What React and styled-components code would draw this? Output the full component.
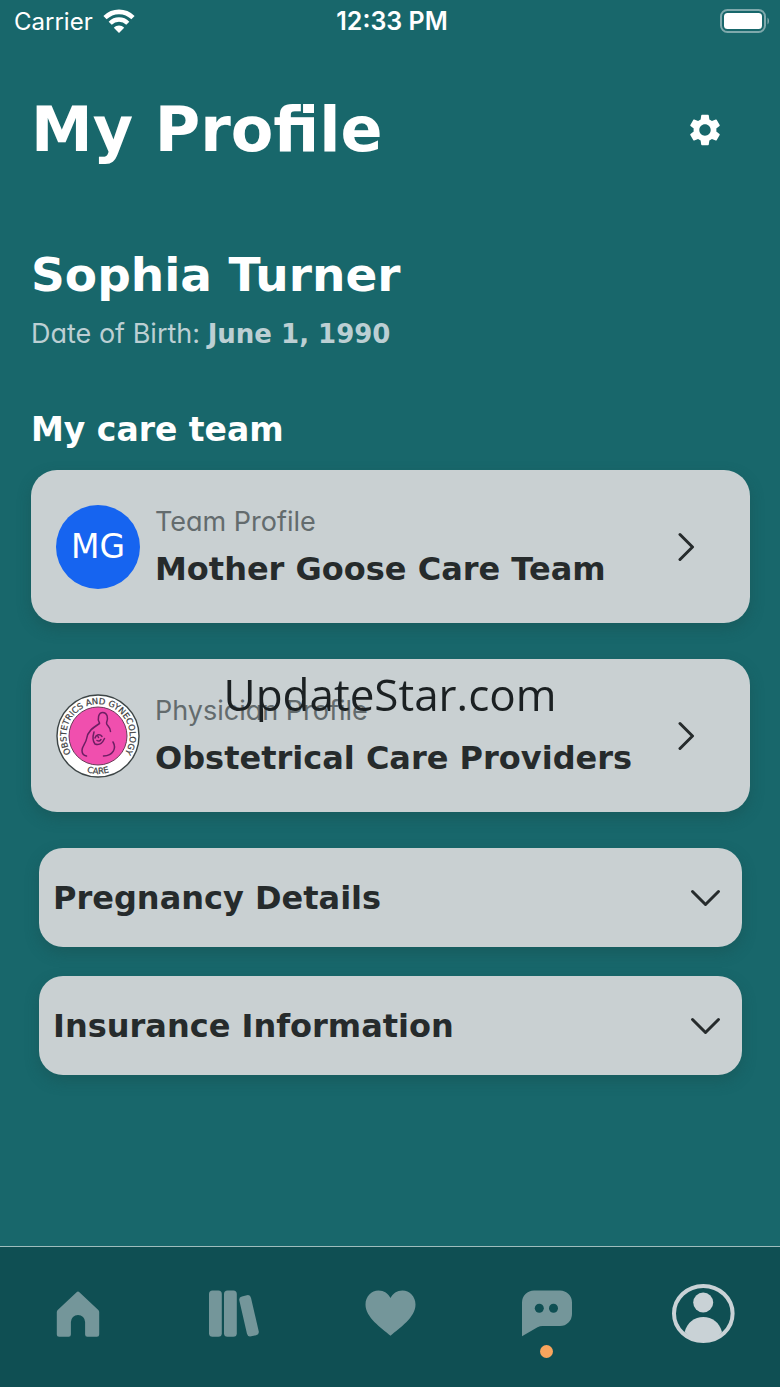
import React, { useState } from 'react'
import styled, { createGlobalStyle } from 'styled-components'
import { MdSettings } from 'react-icons/md'

const colors = {
  page: '#18676b',
  nav: '#0f4f53',
  card: '#c9d0d2',
  ink: '#262b2c',
  label: '#636b6d',
  muted: '#bccfd3',
  inactive: '#74969a',
  active: '#c9d2d6',
  blue: '#1664f0',
  pink: '#f04fae',
  orange: '#f9a55d',
}

const display = `'DejaVu Sans', sans-serif`
const body = `Inter, 'Liberation Sans', sans-serif`

const GlobalStyle = createGlobalStyle`
  * {
    box-sizing: border-box;
  }

  body {
    margin: 0;
    background: ${colors.page};
    font-family: ${body};
  }

  h1, h2, h3, p {
    margin: 0;
  }
`

const Page = styled.div`
  display: flex;
  flex-direction: column;
  min-height: 100vh;
  color: #fff;
  background: ${colors.page};
`

const StatusBar = styled.div`
  display: grid;
  grid-template-columns: 1fr auto 1fr;
  align-items: center;
  height: 44px;
  padding: 0 10px 2px 14px;
  font-size: 24px;
`

const Carrier = styled.div`
  display: flex;
  align-items: center;
  gap: 10px;
`

const Time = styled.time`
  font-size: 25px;
  font-weight: 600;
`

const Battery = styled.svg`
  justify-self: end;
`

const Main = styled.main`
  flex: 1;
  padding: 51px 30px 40px 31px;
`

const Header = styled.header`
  display: flex;
  align-items: center;
  justify-content: space-between;
  padding-right: 26px;
`

const Title = styled.h1`
  font: bold 62px/70px ${display};
`

const IconButton = styled.button`
  display: flex;
  padding: 0;
  border: 0;
  background: none;
  color: #fff;
  cursor: pointer;
`

const Person = styled.section`
  display: flex;
  flex-direction: column;
  gap: 13px;
  margin-top: 82px;
`

const Name = styled.h2`
  font: bold 47px/56px ${display};
`

const Birth = styled.p`
  font-size: 27px;
  line-height: 36px;
  font-feature-settings: 'cv11';
  color: ${colors.muted};

  strong {
    font: bold 26px/36px ${display};
  }
`

const SectionTitle = styled.h3`
  margin: 58px 0 20px;
  font: bold 33px/40px ${display};
`

const CardList = styled.div`
  display: flex;
  flex-direction: column;
  gap: 36px;
`

const Card = styled.a`
  display: flex;
  align-items: center;
  gap: 15px;
  min-height: 153px;
  padding: 0 55px 0 25px;
  border-radius: 26px;
  background: ${colors.card};
  color: ${colors.ink};
  text-decoration: none;
  box-shadow: 0 6px 14px rgba(24, 76, 76, 0.4);
`

const Initials = styled.span`
  display: flex;
  align-items: center;
  justify-content: center;
  flex: none;
  width: 84px;
  height: 84px;
  border-radius: 50%;
  background: ${colors.blue};
  color: #fff;
  font: 33px/40px ${display};
`

const Logo = styled.svg`
  flex: none;
  width: 84px;
  height: 84px;
`

const CardText = styled.span`
  display: flex;
  flex: 1;
  flex-direction: column;
  gap: 9px;
`

const CardLabel = styled.span`
  font-size: 27px;
  line-height: 36px;
  font-feature-settings: 'cv11';
  color: ${colors.label};
`

const CardTitle = styled.span`
  font: bold 32px/40px ${display};
`

const AccordionList = styled.div`
  display: flex;
  flex-direction: column;
  gap: 29px;
  margin: 36px 8px 0;
`

const AccordionButton = styled.button`
  display: flex;
  align-items: center;
  justify-content: space-between;
  width: 100%;
  min-height: 99px;
  padding: 0 21px 0 14px;
  border: 0;
  border-radius: 24px;
  background: ${colors.card};
  color: ${colors.ink};
  font: bold 32px/40px ${display};
  text-align: left;
  box-shadow: 0 6px 14px rgba(24, 76, 76, 0.4);
  cursor: pointer;
`

const NavBar = styled.nav`
  display: grid;
  grid-template-columns: repeat(5, 1fr);
  padding: 35px 0 41px;
  border-top: 1px solid #9fbdbd;
  background: ${colors.nav};
`

const NavItem = styled.a`
  position: relative;
  display: flex;
  justify-content: center;
  color: ${props => (props.$active ? colors.active : colors.inactive)};

  svg {
    overflow: visible;
  }
`

const Dot = styled.span`
  position: absolute;
  top: 63px;
  left: 50%;
  width: 13px;
  height: 13px;
  margin-left: -6px;
  border-radius: 50%;
  background: ${colors.orange};
`

const Watermark = styled.div`
  position: fixed;
  inset: 0;
  display: flex;
  align-items: center;
  justify-content: center;
  font-family: 'Open Sans', 'Noto Sans', sans-serif;
  font-size: 44px;
  color: #1b2022;
  pointer-events: none;
`

const ChevronRight = () => (
  <svg width="17" height="30" viewBox="0 0 17 30" fill="none" aria-hidden="true">
    <path
      d="M2 2.500l12.500 12.500L2 27.500"
      stroke="currentColor"
      strokeWidth="3"
      strokeLinecap="round"
      strokeLinejoin="round"
    />
  </svg>
)

const ChevronDown = () => (
  <svg width="31" height="18" viewBox="0 0 31 18" fill="none" aria-hidden="true">
    <path
      d="M2.500 2.500l13 13 13-13"
      stroke="currentColor"
      strokeWidth="3"
      strokeLinecap="round"
      strokeLinejoin="round"
    />
  </svg>
)

const WifiIcon = () => (
  <svg width="32" height="24" viewBox="0 0 32 24" fill="none" aria-hidden="true">
    <path d="M2 8.600C10 .9 22 .9 30 8.600" stroke="#fff" strokeWidth="4.600" />
    <path d="M7.200 14.200c4.900-4.900 12.700-4.900 17.600 0" stroke="#fff" strokeWidth="4.400" />
    <path d="M16 24l-5.200-5.200c2.900-3 7.500-3 10.400 0z" fill="#fff" />
  </svg>
)

const BatteryIcon = () => (
  <Battery width="51" height="24" viewBox="0 0 51 24" role="img" aria-label="Battery full">
    <rect x="2" y="1" width="44" height="22" rx="6.500" fill="none" stroke="#7fa9ac" strokeWidth="2" />
    <rect x="5" y="4" width="38" height="16" rx="3.500" fill="#fff" />
    <path d="M48.500 8.500c2 1.600 2 5.400 0 7z" fill="#7fa9ac" />
  </Battery>
)

const PracticeLogo = () => (
  <Logo viewBox="0 0 84 84" role="img" aria-label="Obstetrics and Gynecology Care">
    <defs>
      <path id="ring-top" d="M42 73.800a31.800 31.800 0 1 1 .1 0" />
      <path id="ring-bottom" d="M4 42a38 38 0 0 0 76 0" />
    </defs>
    <circle cx="42" cy="42" r="41" fill="#fff" stroke="#3d4546" strokeWidth="1.400" />
    <circle cx="42" cy="42" r="29" fill={colors.pink} stroke="#6b3a58" strokeWidth="1" />
    <g
      fill="#3c3c3e"
      stroke="#3c3c3e"
      strokeWidth="0.200"
      fontFamily="'DejaVu Sans', sans-serif"
      fontSize="8.500"
      textAnchor="middle"
    >
      <text>
        <textPath href="#ring-top" startOffset="50%">
          OBSTETRICS AND GYNECOLOGY
        </textPath>
      </text>
      <text>
        <textPath href="#ring-bottom" startOffset="50%">
          CARE
        </textPath>
      </text>
    </g>
    <g fill="none" stroke="#6d1f63" strokeWidth="1.500" strokeLinecap="round">
      <path d="M43.500 29c-2.500-4-1-10.500 3.300-10.500s6 5.500 3.700 10.500c0 3 4 3.500 4 8.500" />
      <path d="M43.500 29.500c-7 4.500-12 8-13 15.500-.5 4-4.500 7-4.500 11.500 0 3 1.800 5 4.500 5.500" />
      <path d="M57 48c3.500 6 .5 13.500-9.500 14" />
      <path d="M38 38c-1.500 5-1.500 9 1 12 4 1.500 7 0 9.500-5.500" />
      <path d="M39 44c1-3.500 5-4.500 7-1.500M41 46.500c1.500 1 3 .5 4-1M42 42.500l.5 1" />
    </g>
  </Logo>
)

const HomeIcon = () => (
  <path
    fill="currentColor"
    d="M30.600 10.200q1.400-1.400 2.800 0L52.300 27.900q.9.900.9 2.100v22.500q0 2.300-2.300 2.300H41.300q-2.200 0-2.200-2.300V40a7.100 7.100 0 0 0-14.200 0v12.500q0 2.300-2.200 2.300h-9.600q-2.300 0-2.300-2.300V30q0-1.200.9-2.100z"
  />
)

const BooksIcon = () => (
  <g fill="currentColor">
    <rect x="7" y="8.500" width="12.800" height="46.300" rx="3.500" />
    <rect x="22" y="8.500" width="12.800" height="46.300" rx="3.500" />
    <rect x="41" y="13.300" width="12" height="41" rx="3.500" transform="rotate(-13 47 33.800)" />
  </g>
)

const HeartIcon = () => (
  <path
    fill="currentColor"
    d="M32.500 53.700C23 45.500 7.500 35.500 7.500 22.500 7.500 14.500 13.500 8.500 20.500 8.500c5.500 0 9.800 3 12 7.500 2.200-4.500 6.500-7.500 12-7.500 7 0 13 6 13 14 0 13-15.500 23-25 31.200z"
  />
)

const ChatIcon = () => (
  <>
    <path
      fill="currentColor"
      d="M20 8.600h26a12 12 0 0 1 12 12V32a12 12 0 0 1-12 12H28.500q-2.500 0-5 1.300L8 54.300V20.600a12 12 0 0 1 12-12z"
    />
    <circle cx="25.300" cy="26.300" r="4.500" fill={colors.nav} />
    <circle cx="39.500" cy="26.300" r="4.500" fill={colors.nav} />
  </>
)

const ProfileIcon = () => (
  <>
    <ellipse cx="33.300" cy="31.500" rx="29.300" ry="27.600" fill="none" stroke="currentColor" strokeWidth="4" />
    <circle cx="33.200" cy="20.500" r="10" fill="currentColor" />
    <path
      fill="currentColor"
      d="M14.600 50C17 40.500 24.500 35 33.300 35S49.600 40.500 52 50c-5 6-11 9.200-18.700 9.200S19.600 56 14.600 50z"
    />
  </>
)

const navItems = [
  { label: 'Home', Icon: HomeIcon },
  { label: 'Library', Icon: BooksIcon },
  { label: 'Health', Icon: HeartIcon },
  { label: 'Messages', Icon: ChatIcon, unread: true },
  { label: 'Profile', Icon: ProfileIcon, active: true },
]

const careTeam = [
  {
    label: 'Team Profile',
    title: 'Mother Goose Care Team',
    avatar: <Initials>MG</Initials>,
  },
  {
    label: 'Physician Profile',
    title: 'Obstetrical Care Providers',
    avatar: <PracticeLogo />,
  },
]

const Accordion = ({ title }) => {
  const [open, setOpen] = useState(false)

  return (
    <AccordionButton type="button" aria-expanded={open} onClick={() => setOpen(!open)}>
      {title}
      <ChevronDown />
    </AccordionButton>
  )
}

const App = () => (
  <Page>
    <GlobalStyle />
    <StatusBar>
      <Carrier>
        Carrier
        <WifiIcon />
      </Carrier>
      <Time>12:33 PM</Time>
      <BatteryIcon />
    </StatusBar>
    <Main>
      <Header>
        <Title>My Profile</Title>
        <IconButton type="button" aria-label="Settings">
          <MdSettings size={38} />
        </IconButton>
      </Header>
      <Person>
        <Name>Sophia Turner</Name>
        <Birth>
          Date of Birth: <strong>June 1, 1990</strong>
        </Birth>
      </Person>
      <SectionTitle>My care team</SectionTitle>
      <CardList>
        {careTeam.map(({ label, title, avatar }) => (
          <Card href="#" key={title}>
            {avatar}
            <CardText>
              <CardLabel>{label}</CardLabel>
              <CardTitle>{title}</CardTitle>
            </CardText>
            <ChevronRight />
          </Card>
        ))}
      </CardList>
      <AccordionList>
        <Accordion title="Pregnancy Details" />
        <Accordion title="Insurance Information" />
      </AccordionList>
    </Main>
    <NavBar>
      {navItems.map(({ label, Icon, active, unread }) => (
        <NavItem href="#" key={label} aria-label={label} $active={active}>
          <svg width="64" height="64" viewBox="0 0 64 64" aria-hidden="true">
            <Icon />
          </svg>
          {unread && <Dot />}
        </NavItem>
      ))}
    </NavBar>
    <Watermark>UpdateStar.com</Watermark>
  </Page>
)

export default App
